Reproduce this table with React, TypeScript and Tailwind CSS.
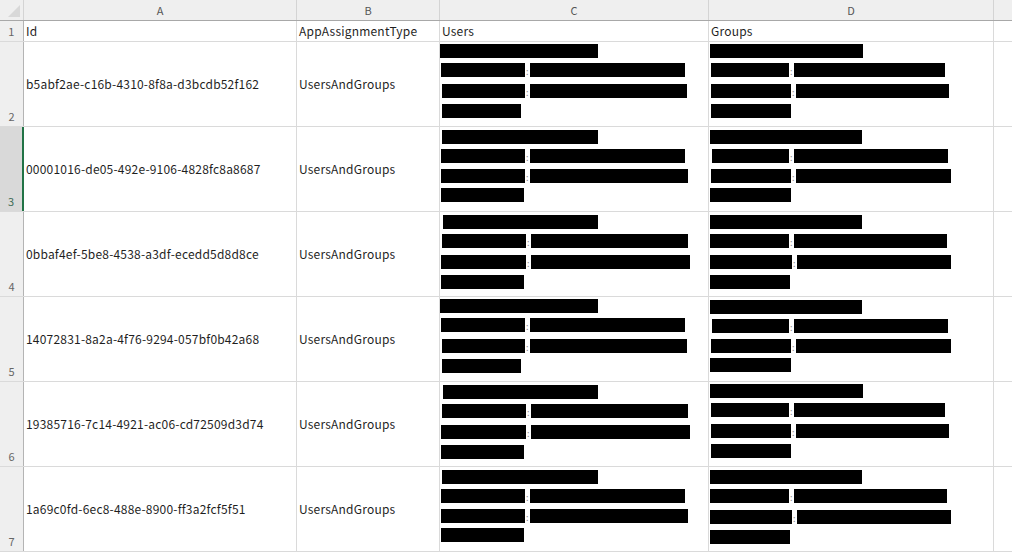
import React from 'react';

type Bar = { l: number; w: number };
type Line = { top: number; bars: Bar[] };

const rows = [
    { n: 2, id: 'b5abf2ae-c16b-4310-8f8a-d3bcdb52f162', users: 0, groups: 0 },
    { n: 3, id: '00001016-de05-492e-9106-4828fc8a8687', users: 1, groups: 1 },
    { n: 4, id: '0bbaf4ef-5be8-4538-a3df-ecedd5d8d8ce', users: 2, groups: 2 },
    { n: 5, id: '14072831-8a2a-4f76-9294-057bf0b42a68', users: 0, groups: 1 },
    { n: 6, id: '19385716-7c14-4921-ac06-cd72509d3d74', users: 2, groups: 0 },
    { n: 7, id: '1a69c0fd-6ec8-488e-8900-ff3a2fcf5f51', users: 1, groups: 2 },
];

// redaction blocks, relative to cell content
const userSets: Line[][] = [
    [
        { top: 2, bars: [{ l: 0, w: 158 }] },
        { top: 5, bars: [{ l: 1, w: 84 }, { l: 2, w: 155 }] },
        { top: 7, bars: [{ l: 2, w: 83 }, { l: 2, w: 157 }] },
        { top: 6, bars: [{ l: 2, w: 79 }] },
    ],
    [
        { top: 3, bars: [{ l: 2, w: 156 }] },
        { top: 5, bars: [{ l: 1, w: 84 }, { l: 2, w: 155 }] },
        { top: 6, bars: [{ l: 1, w: 84 }, { l: 2, w: 158 }] },
        { top: 5, bars: [{ l: 1, w: 83 }] },
    ],
    [
        { top: 3, bars: [{ l: 3, w: 155 }] },
        { top: 5, bars: [{ l: 2, w: 84 }, { l: 2, w: 157 }] },
        { top: 7, bars: [{ l: 1, w: 85 }, { l: 2, w: 159 }] },
        { top: 6, bars: [{ l: 1, w: 83 }] },
    ],
];

const groupSets: Line[][] = [
    [
        { top: 2, bars: [{ l: 1, w: 153 }] },
        { top: 5, bars: [{ l: 2, w: 78 }, { l: 2, w: 151 }] },
        { top: 7, bars: [{ l: 2, w: 80 }, { l: 2, w: 153 }] },
        { top: 6, bars: [{ l: 2, w: 80 }] },
    ],
    [
        { top: 3, bars: [{ l: 1, w: 152 }] },
        { top: 5, bars: [{ l: 3, w: 77 }, { l: 2, w: 154 }] },
        { top: 6, bars: [{ l: 2, w: 80 }, { l: 2, w: 155 }] },
        { top: 5, bars: [{ l: 1, w: 81 }] },
    ],
    [
        { top: 3, bars: [{ l: 1, w: 152 }] },
        { top: 5, bars: [{ l: 1, w: 79 }, { l: 2, w: 153 }] },
        { top: 7, bars: [{ l: 1, w: 82 }, { l: 2, w: 154 }] },
        { top: 6, bars: [{ l: 1, w: 80 }] },
    ],
];

function Redacted({ lines }: { lines: Line[] }) {
    return (
        <div className="flex flex-col">
            {lines.map((line, i) => (
                <div key={i} className="flex items-end h-[14px]" style={{ marginTop: line.top }}>
                    {line.bars.map((b, j) => (
                        <React.Fragment key={j}>
                            {j > 0 && <span className="text-[9px] leading-none text-[#8a8a8a] w-[3px] pl-[1px] mb-[1px]">:</span>}
                            <div className="h-[14px] bg-black" style={{ marginLeft: b.l, width: b.w }} />
                        </React.Fragment>
                    ))}
                </div>
            ))}
        </div>
    );
}

const font = { fontFamily: '"Noto Sans CJK JP", "Noto Sans", sans-serif' };

export default function App() {
    return (
        <div className="w-[1012px] h-[552px] overflow-hidden bg-white text-[#1f1f1f]" style={font}>
            {/* column headers */}
            <div className="flex h-[21px] bg-[#efefef] border-b border-[#a8a8a8] text-[11px] text-[#555]">
                <div className="w-[24px] shrink-0 border-r border-[#d4d4d4] relative">
                    <div className="absolute right-[3px] bottom-[3px] w-0 h-0 border-l-[12px] border-l-transparent border-b-[12px] border-b-[#d8d8d8]" />
                </div>
                <div className="w-[273px] shrink-0 border-r border-[#d4d4d4] flex items-center justify-center">A</div>
                <div className="w-[143px] shrink-0 border-r border-[#d4d4d4] flex items-center justify-center">B</div>
                <div className="w-[269px] shrink-0 border-r border-[#d4d4d4] flex items-center justify-center">C</div>
                <div className="w-[285px] shrink-0 border-r border-[#d4d4d4] flex items-center justify-center">D</div>
                <div className="flex-1" />
            </div>

            {/* row 1 */}
            <div className="flex h-[21px] border-b border-[#dadada] text-[12px] tracking-[0.2px]">
                <div className="w-[24px] shrink-0 bg-[#efefef] border-r border-[#b4b4b4] flex items-center justify-center text-[11px] text-[#666]">1</div>
                <div className="w-[273px] shrink-0 border-r border-[#dadada] flex items-center pl-[2px]">Id</div>
                <div className="w-[143px] shrink-0 border-r border-[#dadada] flex items-center pl-[2px]">AppAssignmentType</div>
                <div className="w-[269px] shrink-0 border-r border-[#dadada] flex items-center pl-[2px]">Users</div>
                <div className="w-[285px] shrink-0 border-r border-[#dadada] flex items-center pl-[2px]">Groups</div>
                <div className="flex-1" />
            </div>

            {rows.map((r) => {
                const active = r.n === 3;
                return (
                    <div key={r.n} className="flex h-[85px] border-b border-[#dadada] text-[12px] tracking-[0.2px]">
                        <div
                            className={`w-[24px] shrink-0 flex items-end justify-center pb-[2px] text-[11px] tracking-normal border-r ${
                                active ? 'bg-[#d9d9d9] border-r-2 border-[#217346] text-[#3d6b55]' : 'bg-[#efefef] border-[#b4b4b4] text-[#666]'
                            }`}
                        >
                            {r.n}
                        </div>
                        <div className="w-[273px] shrink-0 border-r border-[#dadada] flex items-center pl-[2px]">{r.id}</div>
                        <div className="w-[143px] shrink-0 border-r border-[#dadada] flex items-center pl-[2px]">UsersAndGroups</div>
                        <div className="w-[269px] shrink-0 border-r border-[#dadada]">
                            <Redacted lines={userSets[r.users]} />
                        </div>
                        <div className="w-[285px] shrink-0 border-r border-[#dadada]">
                            <Redacted lines={groupSets[r.groups]} />
                        </div>
                        <div className="flex-1" />
                    </div>
                );
            })}
        </div>
    );
}
